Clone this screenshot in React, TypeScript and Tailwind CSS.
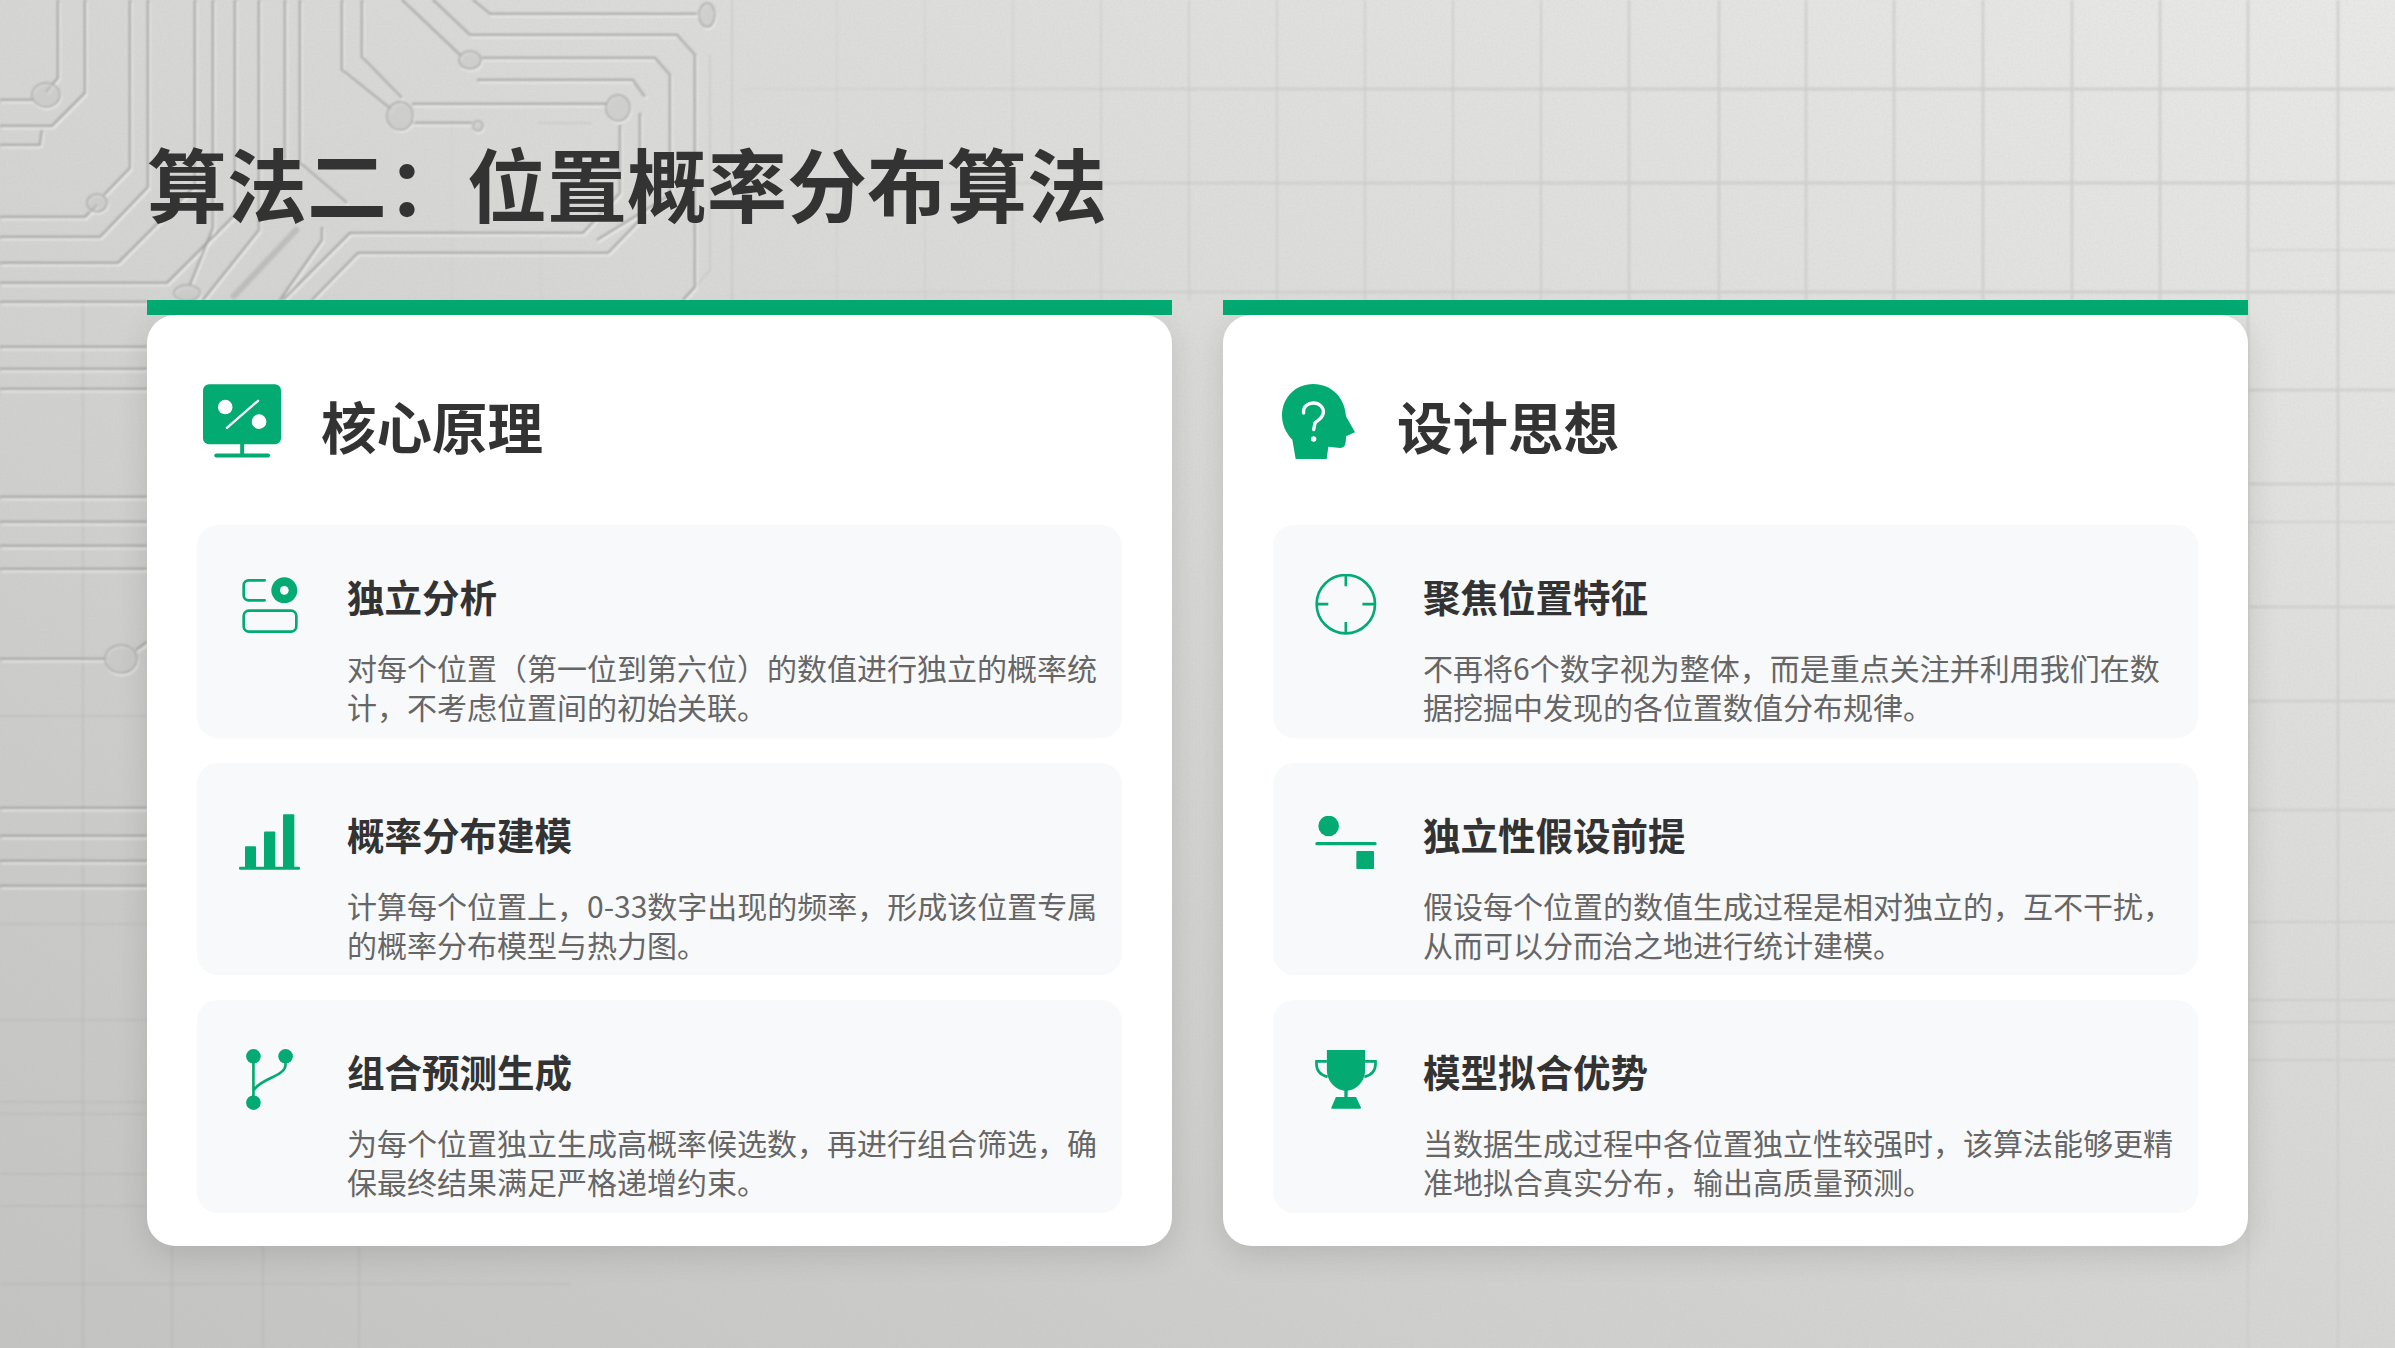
const TRACES = [
  "M58 0V78L46 92", "M0 100H33", "M85 0V93L52 126H0", "M0 145H40L42 130",
  "M130 0V168L104 195", "M148 0V187L100 237H0", "M0 217H85L97 205",
  "M195 0V186L118 263H0", "M235 0V215L167 283H0", "M213 0V228L190 285",
  "M259 0V230L203 300", "M285 0V160", "M300 0V163L347 203", "M322 227V240L280 300",
  "M283 300L350 233H583L620 193V125", "M312 300L358 253H608L640 220V113",
  "M342 0V70L392 110", "M362 0V57L402 98", "M412 104H606", "M412 123H472",
  "M433 0L470 35H677L695 55V287L683 300", "M402 0L460 55", "M482 58H655L670 75V195L597 240",
  "M477 80H633L645 97", "M473 0L490 14H697", "M0 302H147", "M0 347H147", "M0 369H147",
  "M0 389H147", "M0 497H147", "M0 522H147", "M0 546H147", "M0 569H147", "M0 659H105",
  "M136 650L147 642", "M0 808H147", "M0 836H147", "M0 861H147", "M0 886H147",
];

const FAINT = [
  "M538 123H592", "M710 55V270L685 298", "M732 0V300", "M0 716H147", "M0 924H147", "M0 1020H147",
  "M0 1102H147", "M0 1114H147", "M0 1174H147", "M0 1206H147", "M0 1284H570", "M83 300V1348",
  "M172 1246V1348", "M263 1246V1348", "M359 1246V1348", "M2248 250H2395", "M2248 522H2395",
  "M2248 922H2395", "M2248 1000H2395", "M2248 1022H2395", "M2248 1060H2395",
];

const GRID_X = [837, 925, 1013, 1101, 1189, 1277, 1365, 1453, 1541, 1629, 1719, 1806, 1894, 1983, 2072, 2160, 2248];
const GRID_Y = [89, 183, 292];

const PADS = [
  [46, 95, 14, 12], [97, 203, 10, 9], [187, 293, 13, 8], [400, 116, 13, 14], [470, 60, 11, 9],
  [618, 108, 12, 13], [707, 15, 8, 12], [478, 126, 5, 5], [121, 659, 16, 14],
];

// full-width punctuation
const COMMA = "\uFF0C";
const COLON = "\uFF1A";
const LP = "\uFF08";
const RP = "\uFF09";

function Backdrop() {
  return (
    <svg className="absolute inset-0" width="2395" height="1348" viewBox="0 0 2395 1348">
      <defs>
        <filter id="grain" x="0" y="0" width="100%" height="100%">
          <feTurbulence type="fractalNoise" baseFrequency="0.45" numOctaves="2" seed="4" />
          <feColorMatrix values="0 0 0 0 0.5  0 0 0 0 0.5  0 0 0 0 0.5  1.6 0 0 0 -0.5" />
        </filter>
        <filter id="soft">
          <feGaussianBlur stdDeviation="0.85" />
        </filter>
        <linearGradient id="fade" gradientUnits="userSpaceOnUse" x1="740" y1="0" x2="1650" y2="0">
          <stop offset="0" stopColor="#bdbdbb" stopOpacity="0.12" />
          <stop offset="1" stopColor="#cbcbca" stopOpacity="0.8" />
        </linearGradient>
      </defs>
      <g fill="none" filter="url(#soft)">
        <g stroke="#9c9c9a" strokeOpacity="0.25" strokeWidth="1.5">
          {FAINT.map((d) => (
            <path key={d} d={d} />
          ))}
        </g>
        <g stroke="url(#fade)" strokeWidth="3">
          {GRID_Y.map((y) => (
            <path key={y} d={`M740 ${y}H2395`} />
          ))}
        </g>
        <g stroke="#cfcfce" strokeWidth="2.5">
          {GRID_X.filter((x) => x > 1600).map((x) => (
            <path key={x} d={`M${x} 0V${x === 2248 ? 1348 : 300}`} />
          ))}
          <path d="M2338 0V1348" />
          {[390, 484, 607, 701, 810].map((y) => (
            <path key={y} d={`M2248 ${y}H2395`} />
          ))}
        </g>
        <g stroke="url(#fade)" strokeWidth="2">
          {GRID_X.filter((x) => x < 1600).map((x) => (
            <path key={x} d={`M${x} 0V300`} />
          ))}
          <path d="M452 120V300M541 240V300" />
        </g>
        <g stroke="#ffffff" strokeOpacity="0.55" strokeWidth="2.5" transform="translate(1.5 2)">
          {TRACES.map((d) => (
            <path key={d} d={d} />
          ))}
        </g>
        <g stroke="#949492" strokeOpacity="0.7" strokeWidth="2.5">
          {TRACES.map((d) => (
            <path key={d} d={d} />
          ))}
        </g>
        <path d="M298 228L232 298" stroke="#9a9a98" strokeOpacity="0.4" strokeWidth="6" />
        {PADS.map(([cx, cy, rx, ry]) => (
          <g key={`${cx}-${cy}`}>
            <ellipse cx={cx + 1} cy={cy + 2} rx={rx} ry={ry} stroke="#ffffff" strokeOpacity="0.5" strokeWidth="2" />
            <ellipse cx={cx} cy={cy} rx={rx} ry={ry} fill="#c6c6c4" fillOpacity="0.5" stroke="#a8a8a6" strokeWidth="1.5" />
          </g>
        ))}
      </g>
      <rect width="2395" height="1348" filter="url(#grain)" opacity="0.14" />
    </svg>
  );
}

const GREEN = "#03aa72";

function MonitorIcon() {
  return (
    <svg width="78" height="74" viewBox="68 73 235 222">
      <rect x="68" y="73" width="235" height="181" rx="18" fill={GREEN} />
      <circle cx="135" cy="142" r="22" fill="#fff" />
      <circle cx="237" cy="186" r="22" fill="#fff" />
      <path d="M140 205L234 123" stroke="#fff" strokeWidth="7" strokeLinecap="round" />
      <rect x="180" y="250" width="12" height="36" fill={GREEN} />
      <rect x="102" y="282" width="168" height="12" rx="6" fill={GREEN} />
    </svg>
  );
}

function HeadIcon() {
  return (
    <svg width="73" height="75" viewBox="66 68 219 225">
      <path
        d="M160 68C105 68 66 110 66 163C66 190 78 215 97 235L107 293H200L205 256L240 260C255 260 258 250 258 225L285 213L258 165C255 110 215 68 160 68Z"
        fill={GREEN}
      />
      <path
        d="M131 155C128 135 145 125 160 125C178 125 192 138 190 155C188 170 175 175 165 185L161 205"
        fill="none"
        stroke="#fff"
        strokeWidth="10"
        strokeLinecap="round"
      />
      <circle cx="161" cy="233" r="8" fill="#fff" />
    </svg>
  );
}

function SlotsIcon() {
  return (
    <svg width="56" height="56" viewBox="185 652 168 168">
      <g fill="none" stroke={GREEN} strokeWidth="8" strokeLinecap="round">
        <path d="M253 662H205A15 15 0 0 0 190 677V707A15 15 0 0 0 205 722H253" />
        <rect x="190" y="753" width="158" height="63" rx="16" />
      </g>
      <circle cx="312" cy="692" r="39" fill={GREEN} />
      <circle cx="312" cy="692" r="13" fill="#fff" />
    </svg>
  );
}

function BarsIcon() {
  return (
    <svg width="61" height="56" viewBox="117 76 183 167" fill={GREEN}>
      <rect x="135" y="172" width="33" height="66" rx="3" />
      <rect x="192" y="128" width="34" height="110" rx="3" />
      <rect x="249" y="76" width="34" height="162" rx="3" />
      <rect x="117" y="234" width="183" height="9" rx="4" />
    </svg>
  );
}

function ForkIcon() {
  return (
    <svg width="47" height="61" viewBox="143 780 141 184" fill={GREEN}>
      <circle cx="165" cy="802" r="22" />
      <circle cx="262" cy="802" r="22" />
      <circle cx="165" cy="942" r="22" />
      <path d="M165 802V942M262 802V825C262 865 190 865 165 905" fill="none" stroke={GREEN} strokeWidth="8" />
    </svg>
  );
}

function CrosshairIcon() {
  return (
    <svg width="62" height="61" viewBox="163 645 185 184">
      <g fill="none" stroke={GREEN} strokeWidth="8">
        <circle cx="255" cy="736" r="88" />
        <path d="M255 650V682M255 790V825M167 736H202M305 736H345" />
      </g>
    </svg>
  );
}

function BalanceIcon() {
  return (
    <svg width="62" height="53" viewBox="103 80 184 159" fill={GREEN}>
      <circle cx="143" cy="110" r="31" />
      <rect x="103" y="158" width="184" height="10" rx="5" />
      <rect x="226" y="185" width="53" height="54" rx="3" />
    </svg>
  );
}

function TrophyIcon() {
  return (
    <svg width="62" height="59" viewBox="103 780 184 176" fill={GREEN}>
      <path d="M138 780H252V840C252 875 225 902 195 902C165 902 138 875 138 840Z" />
      <path d="M138 814H107C105 840 118 855 140 860M252 814H283C285 840 272 855 250 860" fill="none" stroke={GREEN} strokeWidth="8" />
      <rect x="190" y="898" width="10" height="24" />
      <path d="M165 920H225L240 952Q240 955 235 955H155Q150 955 151 952Z" />
    </svg>
  );
}

function Panel({ icon, title, text }: { icon: React.ReactNode; title: string; text: string }) {
  return (
    <div className="flex flex-1 items-start rounded-[21px] bg-[#f8f9fa] pl-[39px]">
      <div className="mt-[46px] flex h-[67px] w-[67px] shrink-0 items-center justify-center">{icon}</div>
      <div className="ml-[44px] w-[758px] pt-[47px]">
        <h3 className="text-[37.5px] leading-[48px] font-bold text-[#333333]">{title}</h3>
        <p className="mt-[28px] text-[30px] leading-[39px] text-[#666666]">{text}</p>
      </div>
    </div>
  );
}

function Card({ icon, title, children }: { icon: React.ReactNode; title: string; children: React.ReactNode }) {
  return (
    <section className="flex w-[1025px] flex-col">
      <div className="h-[15px] bg-[#03aa72]" />
      <div className="flex h-[931px] flex-col rounded-[28px] bg-white px-[50px] pt-[44px] pb-[33px] shadow-[0_8px_32px_rgba(0,0,0,0.12)]">
        <div className="mb-[42px] flex h-[124px] items-center">
          <div className="flex w-[90px] justify-center">{icon}</div>
          <h2 className="ml-[34px] mt-[7px] text-[55.5px] leading-[72px] font-bold text-[#333333]">{title}</h2>
        </div>
        <div className="flex flex-1 flex-col gap-[25px]">{children}</div>
      </div>
    </section>
  );
}

export default function App() {
  return (
    <div
      lang="zh-CN"
      className="relative h-[1348px] w-[2395px] overflow-hidden bg-linear-to-tr from-[#c3c3c1] to-[#e9e9e8] font-['Noto_Sans_CJK_SC',sans-serif]"
    >
      <Backdrop />
      <div className="relative flex h-full flex-col px-[147px] pt-[131px]">
        <h1 className="mb-[69px] text-[80px] leading-[100px] font-bold text-[#333333]">{`算法二${COLON}位置概率分布算法`}</h1>
        <div className="flex gap-[51px]">
          <Card icon={<MonitorIcon />} title="核心原理">
            <Panel
              icon={<SlotsIcon />}
              title="独立分析"
              text={`对每个位置${LP}第一位到第六位${RP}的数值进行独立的概率统计${COMMA}不考虑位置间的初始关联。`}
            />
            <Panel
              icon={<BarsIcon />}
              title="概率分布建模"
              text={`计算每个位置上${COMMA}0-33数字出现的频率${COMMA}形成该位置专属的概率分布模型与热力图。`}
            />
            <Panel
              icon={<ForkIcon />}
              title="组合预测生成"
              text={`为每个位置独立生成高概率候选数${COMMA}再进行组合筛选${COMMA}确保最终结果满足严格递增约束。`}
            />
          </Card>
          <Card icon={<HeadIcon />} title="设计思想">
            <Panel
              icon={<CrosshairIcon />}
              title="聚焦位置特征"
              text={`不再将6个数字视为整体${COMMA}而是重点关注并利用我们在数据挖掘中发现的各位置数值分布规律。`}
            />
            <Panel
              icon={<BalanceIcon />}
              title="独立性假设前提"
              text={`假设每个位置的数值生成过程是相对独立的${COMMA}互不干扰${COMMA}从而可以分而治之地进行统计建模。`}
            />
            <Panel
              icon={<TrophyIcon />}
              title="模型拟合优势"
              text={`当数据生成过程中各位置独立性较强时${COMMA}该算法能够更精准地拟合真实分布${COMMA}输出高质量预测。`}
            />
          </Card>
        </div>
      </div>
    </div>
  );
}
